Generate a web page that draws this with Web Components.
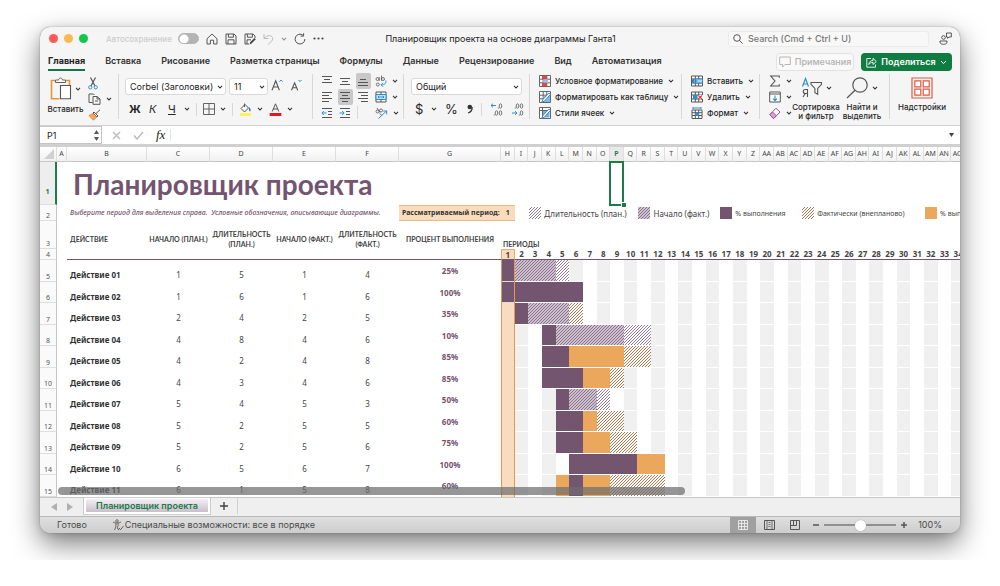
<!DOCTYPE html>
<html lang="ru">
<head>
<meta charset="utf-8">
<title>Планировщик проекта</title>
<style>
body { margin: 0; background: #fff; font-family: Inter, "Liberation Sans", sans-serif; font-size: 8px; color: #262626; }
</style>
</head>
<body>
<planner-window></planner-window>

<script>
const define = (name, css, html, extra) => {
  const tpl = document.createElement('template');
  tpl.innerHTML = `<style>*{box-sizing:border-box}button,input,select{font:inherit;color:inherit;margin:0;padding:0;border:0;background:none;outline:0}${css}</style>${html}`;
  customElements.define(name, class extends HTMLElement {
    constructor() {
      super();
      this.attachShadow({ mode: 'open' }).append(tpl.content.cloneNode(true));
    }
    connectedCallback() { if (extra) extra(this, this.shadowRoot); }
  });
};

/* ---------- icons ---------- */
const G = 'stroke="#555" fill="none"';
const B = 'stroke="#2b8fd0" fill="none"';
const lines = (a) => a.map(([x1, x2, y]) => `<path d="M${x1} ${y}H${x2}" ${G}/>`).join('');
const ICONS = {
  chev: [6, 4, `<path d="M1 .8 3 3 5 .8" stroke="#333" fill="none" stroke-width="1.1"/>`],
  chevw: [7, 5, `<path d="M1 1 3.500 3.600 6 1" stroke="#fff" fill="none"/>`],
  home: [12, 12, `<path d="M1 5.800 6 1l5 4.800V11H7.600V7.200H4.400V11H1z" ${G}/>`],
  save: [12, 12, `<path d="M1 1h8l2 2v8H1zM3.400 1v3.200h5V1M3 11V6.800h6V11" ${G}/>`],
  saveas: [12, 12, `<path d="M5 11H1V1h8l2 2v2M3.400 1v3.200h5V1M3 11V6.800h4" ${G}/><path d="M5.500 11.500 6.300 9 10.500 5l1.300 1.300-4.200 4.300z" fill="#444"/>`],
  undo: [11, 12, `<path d="M1 1v4.500h4.500M1.200 5.300C4 1.500 9.500 2 9.700 5.600 9.800 8 7 9.500 5 11.500" stroke="#bbb" fill="none"/>`],
  redo: [12, 12, `<path d="M10.900 6A4.900 4.900 0 1 1 9 2.200M9.600 .2v2.900H6.600" ${G}/>`],
  dots: [11, 3, `<circle cx="1.500" cy="1.500" r="1.100" fill="#444"/><circle cx="5.500" cy="1.500" r="1.100" fill="#444"/><circle cx="9.500" cy="1.500" r="1.100" fill="#444"/>`],
  search: [10, 10, `<circle cx="4" cy="4" r="3.300" ${G}/><path d="M6.400 6.400 9.500 9.500" ${G}/>`],
  people: [13, 13, `<circle cx="4.500" cy="5.500" r="1.800" ${G}/><path d="M1 9h7v1.200C8 13 1 13 1 10.200zM7.500 1h4.800v4H10L8.600 6.300V5H7.500z" ${G}/>`],
  comment: [12, 12, `<path d="M.7 1h10.600v7.500H6L3.500 11V8.500H.7z" stroke="#b5b5b5" fill="none"/>`],
  share: [11, 11, `<path d="M5 1.500H.800v8.700h8.700V7.500M2.800 7.500c.3-2.800 2-4 4.200-4V1.300L10.300 4.500 7 7.500V5.400c-2 0-3.200.6-4.200 2.100z" stroke="#fff" fill="none" stroke-width=".9"/>`],
  paste: [22, 24, `<path d="M5 3.500H1.500v18.200h8M16 3.500h3.500V8" stroke="#e8953a" fill="none" stroke-width="1.600"/><path d="M5.500 5.500V3h3c.4-2.600 3.600-2.600 4 0h3v2.500z" fill="#fafafa" stroke="#666"/><path d="M10.500 8.500h10v13.200h-10z" fill="#fff" stroke="#555" stroke-width="1.100"/>`],
  cut: [10, 13, `<path d="M2.500 .5 7 9M7.500 .5 3 9" ${G} stroke-width="1.200"/><circle cx="2.300" cy="10.300" r="1.600" ${B}/><circle cx="7.700" cy="10.300" r="1.600" ${B}/>`],
  copy: [13, 12, `<path d="M4.500 9.500H1V1h4.500l1 1" ${G}/><path d="M5 3.500h4l3 2.500v5.300H5zM9 3.500V6h3M7 8h3" ${G}/>`],
  brush: [13, 12, `<path d="M12 .8 8 4.500M6 3l4 4-1 1-4-4z" stroke="#555" fill="#fff"/><path d="M5 4.500 1 6.500 5.500 11.200 8.700 8z" fill="#f4a95c" stroke="#d9803a" stroke-width=".8"/>`],
  borders: [12, 12, `<path d="M.5 .5h11v11H.5zM6 .5v11M.5 6h11" ${G} stroke-width=".9"/>`],
  bucket: [13, 13, `<path d="M6 1.500 2 5.500 5.500 9l4-4zM5.500 .5v3.500" ${G}/><path d="M10 4c2 2 2 3.500 1 4.500-1-.5-1.300-2-1-4.500z" fill="#2b6fb0"/><path d="M1 10h11v3H1z" fill="#fff25a"/>`],
  fontcolor: [13, 13, `<path d="M3.200 8.500 6.500 .8 9.800 8.500M4.300 6h4.400" ${G}/><path d="M.7 10h11.600v3H.7z" fill="#e8141c"/>`],
  biga: [12, 12, `<path d="M1 11.200 4.700 1.800 8.400 11.200M2.300 8h4.800" ${G} stroke-width="1.100"/><path d="M8.500 2.600 10 1l1.500 1.600" ${B}/>`],
  smalla: [12, 12, `<path d="M1.500 11.200 4.600 3.800 7.700 11.200M2.600 8.700h4" ${G} stroke-width="1.100"/><path d="M8.500 1 10 2.600 11.500 1" ${B}/>`],
  top: [12, 12, lines([[1, 11, 1.5], [3, 9, 4.5], [1, 11, 7.5]])],
  mid: [12, 12, lines([[1, 11, 3.5], [3, 9, 6.5], [1, 11, 9.5]])],
  bot: [12, 12, lines([[3, 9, 4.5], [1, 11, 7.5], [1, 11, 10.5]])],
  left: [12, 12, lines([[1, 11, 1.5], [1, 8, 4.5], [1, 11, 7.5], [1, 8, 10.5]])],
  center: [12, 12, lines([[1, 11, 1.5], [3, 9, 4.5], [1, 11, 7.5], [3, 9, 10.5]])],
  right: [12, 12, lines([[1, 11, 1.5], [4, 11, 4.5], [1, 11, 7.5], [4, 11, 10.5]])],
  outdent: [12, 12, lines([[1, 11, 1.5], [7, 11, 4.5], [7, 11, 7.5], [1, 11, 10.5]]) + `<path d="M5.500 6H1M2.800 4 .9 6l1.900 2" ${B}/>`],
  indent: [12, 12, lines([[1, 11, 1.5], [7, 11, 4.5], [7, 11, 7.5], [1, 11, 10.5]]) + `<path d="M.5 6H5M3.200 4 5.100 6 3.200 8" ${B}/>`],
  wrap: [12, 13, `<circle cx="2.500" cy="4" r="1.500" ${G} stroke-width=".8"/><path d="M4.300 2.200v3.600M6.500 .5v5.300" ${G} stroke-width=".8"/><circle cx="8" cy="4" r="1.500" ${G} stroke-width=".8"/><circle cx="2.800" cy="9.500" r="1.500" ${G} stroke-width=".8"/><path d="M10.800 5.500c.5 3-1 4.300-4.600 4.300M8 7.800 6 9.800l2 2" ${B}/>`],
  merge: [12, 12, `<path d="M1 1h10v10H1z" fill="#fff" stroke="#555"/><path d="M1 3.500h10v5H1z" fill="#cfe6f6" stroke="#2b8fd0"/><path d="M6 1v2.500M6 8.500V11" ${G}/><path d="M3 6h6M4.300 4.800 3 6l1.300 1.200M7.700 4.800 9 6 7.700 7.200" stroke="#1f78b8" fill="none" stroke-width=".8"/>`],
  orient: [13, 12, `<circle cx="2.500" cy="4.500" r="1.500" ${G} stroke-width=".8"/><circle cx="6" cy="3.500" r="1.500" ${G} stroke-width=".8"/><path d="M2 1l3 4.500M4.500 6.500l2.500 2" ${G} stroke-width=".8"/><path d="M3.500 11.500 11.500 4M8.300 4h3.400v3.300" ${B}/>`],
  decinc: [13, 13, `<path d="M6 2.500H1M3 .7 1 2.500l2 1.800" ${B}/><ellipse cx="10.500" cy="3" rx="1.300" ry="2.200" ${G} stroke-width=".8"/><ellipse cx="6.500" cy="10" rx="1.300" ry="2.200" ${G} stroke-width=".8"/><ellipse cx="10.500" cy="10" rx="1.300" ry="2.200" ${G} stroke-width=".8"/><path d="M3.800 12h.9M7.800 5h.9" ${G}/>`],
  decdec: [13, 13, `<path d="M1 10h5M4 8.200 6 10l-2 1.800" ${B}/><ellipse cx="10.500" cy="3" rx="1.300" ry="2.200" ${G} stroke-width=".8"/><ellipse cx="6.500" cy="3" rx="1.300" ry="2.200" ${G} stroke-width=".8"/><ellipse cx="10.500" cy="10" rx="1.300" ry="2.200" ${G} stroke-width=".8"/><path d="M3.800 5h.9M7.800 12h.9" ${G}/>`],
  comma: [7, 10, `<circle cx="3.800" cy="3" r="2.300" fill="#333"/><path d="M6.100 3c.2 3-1.300 5.200-4 6" stroke="#333" fill="none" stroke-width="1.200"/>`],
  cond: [12, 12, `<path d="M.5 .5h11v11H.5zM.5 4.200h11M.5 7.800h11M4.200 .5v11M7.800 .5v11" fill="#fff" stroke="#666"/><path d="M3 1h5v3.300H3zM3 7.700h5V11H3z" fill="#e8414c"/><path d="M4.300 4.300H9v3.400H4.300z" fill="#8ec5ea"/>`],
  fmt: [12, 12, `<path d="M.5 .5h11v11H.5zM.5 4.200h11M.5 7.800h11M4.200 .5v11M7.800 .5v11" fill="#fff" stroke="#666"/><path d="M5 5h6v6H5z" fill="#7fbde8"/><path d="M2.500 11.500 4 8.500 10 2l1.500 1.300L5.500 10z" fill="#fff" stroke="#2474ad" stroke-width=".8"/>`],
  cellst: [12, 12, `<path d="M.5 .5h11v11H.5zM.5 3.500h11M3.500 .5v11" fill="#fff" stroke="#666"/><path d="M4 4h6.500v6.500H4z" fill="#6db3e4"/><path d="M2.500 11.500 4 8.500 10 2l1.500 1.300L5.500 10z" fill="#fff" stroke="#2474ad" stroke-width=".8"/>`],
  ins: [12, 12, `<path d="M.5 1h11v10H.5zM.5 4h11M.5 8h11M4.300 1v10M7.700 1v10" fill="#fff" stroke="#555"/><path d="M4.500 4H11.500v4H4.500z" fill="#a9d3f0" stroke="#2b8fd0"/><path d="M6.500 6H1M3 4 1 6l2 2" stroke="#1f78b8" fill="none" stroke-width="1.200"/>`],
  del: [12, 12, `<path d="M.5 1h11v10H.5zM.5 4h11M.5 8h11M4.300 1v10M7.700 1v10" fill="#fff" stroke="#555"/><path d="M2 4h4.500v4H2z" fill="#2b8fd0"/><path d="M7 4h5v4H7z" fill="#fff"/><path d="M7.300 4.300 11 8M11 4.300 7.300 8" stroke="#e33" fill="none" stroke-width="1.200"/>`],
  form: [12, 12, `<path d="M1 3h10v8.500H1zM1 5.700h10M1 8.500h10M4.300 3v8.500M7.700 3v8.500" fill="#fff" stroke="#555"/><path d="M4 5.700h4v3H4z" fill="#2b8fd0"/><path d="M2 1h8M2 0v2M10 0v2" ${B}/>`],
  sigma: [12, 12, `<path d="M10.300 2.800V1H1.700L6 6 1.700 11h8.600V9.200" ${G} stroke-width="1.100"/>`],
  filldn: [12, 12, `<path d="M.7 1h10.600v10H.7zM.7 3h10.600" fill="#fff" stroke="#555"/><path d="M6 4.500v5M4 7.600 6 9.600l2-2" ${B} stroke-width="1.100"/>`],
  eraser: [12, 12, `<path d="M1 7.500 7 1.200 11 5 5 11.200H4z" fill="#fff" stroke="#a44aa8"/><path d="M1 7.500 3.500 5 7.300 8.800 5 11.200H4z" fill="#d9a6db" stroke="#a44aa8"/>`],
  sort: [22, 22, `<path d="M1.500 9.500 4.500 1.500 7.500 9.500M2.500 7h4" stroke="#2b8fd0" fill="none" stroke-width="1.200"/><path d="M6.500 20V12.500H4.200c-2.600 0-2.600 4 0 4H6.500M4.300 16.500 2 20" ${G} stroke-width="1.100"/><path d="M10 5.500h10.500v1.800L16.700 11.500v5.800l-2.800-1.600v-4.200L10 7.300z" ${G} stroke-width="1.100"/>`],
  find: [23, 22, `<circle cx="14" cy="8" r="7.200" ${G} stroke-width="1.200"/><path d="M9 13.200 1 21" ${G} stroke-width="1.200"/>`],
  addins: [22, 22, `<path d="M1 1h20v20H1z" fill="none" stroke="#dd5a43" stroke-width="1.200"/><path d="M3.800 3.800h6v6h-6zM12.200 3.800h6v6h-6zM3.800 12.200h6v6h-6zM12.200 12.200h6v6h-6z" fill="#fff" stroke="#dd5a43" stroke-width="1.200"/>`],
  cross: [9, 9, `<path d="M1 1l7 7M8 1 1 8" stroke="#bbb" fill="none" stroke-width="1.400"/>`],
  check: [11, 9, `<path d="M1 4.500 4 8 10 1" stroke="#bbb" fill="none" stroke-width="1.400"/>`],
  spin: [5, 13, `<path d="M2.500 1 5 5H0zM2.500 12 5 8H0z" fill="#555"/>`],
  down: [5, 4, `<path d="M0 0h5L2.500 4z" fill="#444"/>`],
  prev: [6, 8, `<path d="M6 0v8L0 4z" fill="#b0b0b0"/>`],
  next: [6, 8, `<path d="M0 0v8l6-4z" fill="#b0b0b0"/>`],
  plus: [8, 8, `<path d="M4 0v8M0 4h8" stroke="#444" fill="none" stroke-width="1.400"/>`],
  minus: [6, 2, `<path d="M0 1h6" stroke="#555" fill="none" stroke-width="1.500"/>`],
  plus2: [6, 6, `<path d="M3 0v6M0 3h6" stroke="#555" fill="none" stroke-width="1.500"/>`],
  access: [12, 12, `<circle cx="5" cy="2" r="1.300" ${G} stroke-width=".8"/><path d="M1 3c2 1.500 6 1.500 8 0M4 4.500c0 3-.5 5-1.500 6.500M6 4.500v2M7 11c-2-1-2-3.500-.5-4.500M7 9l1.500 1.800L11.500 7" ${G} stroke-width=".9"/>`],
  vnormal: [10, 10, `<path d="M.5 .5h9v9h-9zM3.500 0v10M6.500 0v10M0 3.500h10M0 6.500h10" stroke="#f4f4f4" fill="none" stroke-width=".8"/>`],
  vpage: [11, 10, `<path d="M.5 .5h10v9H.5z" ${G}/><path d="M3 1v8M8 1v8M4.500 2.500h2M4.500 4.500h2M4.500 6.500h2" ${G} stroke-width=".8"/>`],
  vbreak: [10, 10, `<path d="M.5 .5h9v9h-9zM3.500 .5v5M6.500 .5v5M.5 5.500h6" ${G}/>`],
  corner: [10, 10, `<path d="M10 0v10H0z" fill="#d0d0d0"/>`]
};
define('ui-icon', ':host{display:inline-block;flex:none;line-height:0}svg{display:block}', '', (el, root) => {
  const [w, h, body] = ICONS[el.getAttribute('name')];
  const s = document.createElement('span');
  s.innerHTML = `<svg width="${w}" height="${h}" viewBox="0 0 ${w} ${h}" aria-hidden="true">${body}</svg>`;
  root.append(s.firstChild);
});

/* ---------- button with icon, caption and optional menu arrow ---------- */
define('tool-button', `
:host{display:inline-flex;min-width:0}
button{display:flex;align-items:center;gap:4px;flex:1;white-space:nowrap;line-height:10px;font-weight:500;height:14px}
:host([menu]) button{justify-content:space-between}
:host([on]) button{background:#c8c8c8;border-radius:2px;margin:-1px;height:16px;padding:0 2px 0 1px}
:host([caption]) button{justify-content:flex-start}
:host([light]) button{font-weight:400}
ui-icon[name=chev]{margin-left:1px}
`, `<button type="button"><slot></slot></button>`, (el, root) => {
  const b = root.querySelector('button');
  if (el.hasAttribute('icon')) b.insertAdjacentHTML('afterbegin', `<ui-icon name="${el.getAttribute('icon')}"></ui-icon>`);
  if (el.hasAttribute('menu')) b.insertAdjacentHTML('beforeend', '<ui-icon name="chev"></ui-icon>');
  if (el.hasAttribute('label')) b.setAttribute('aria-label', el.getAttribute('label'));
});

/* tall button: large icon over a caption */
define('big-button', `
:host{display:block}
button{display:flex;flex-direction:column;align-items:center;width:100%;gap:4px;line-height:9px;font-weight:500;white-space:nowrap}
span{display:flex;align-items:center;gap:3px}
`, `<button type="button"><span></span><div><slot></slot></div></button>`, (el, root) => {
  root.querySelector('span').innerHTML = `<ui-icon name="${el.getAttribute('icon')}"></ui-icon>` + (el.hasAttribute('menu') ? '<ui-icon name="chev"></ui-icon>' : '');
});

define('pick-list', `
:host{display:flex;position:relative}
select{appearance:none;width:100%;height:17px;border:1px solid #d9d9d9;border-radius:3px;background:#fff;padding:0 4px;font-size:9px;line-height:15px;color:#222}
ui-icon{position:absolute;right:3px;top:7px;pointer-events:none}
`, `<select></select><ui-icon name="chev"></ui-icon>`, (el, root) => {
  const s = root.querySelector('select');
  s.setAttribute('aria-label', el.getAttribute('label'));
  s.innerHTML = `<option>${el.getAttribute('value')}</option>`;
});

/* ---------- title bar ---------- */
define('title-bar', `
:host{display:grid;grid-template-columns:minmax(0,1fr) auto minmax(0,1fr);align-items:center;height:23px;padding:0 8px 0 9px}
.l,.r{display:flex;align-items:center}
.dot{width:9px;height:9px;border-radius:50%;margin-right:6px}
.auto{display:flex;align-items:center;gap:6px;color:#cdcdcd;margin-left:12px;margin-right:7px;font-weight:500}
.auto input{appearance:none;width:21px;height:11px;border-radius:6px;background:radial-gradient(circle at 5px 5px,#fff 4px,transparent 5px),#b4b4b4;border:1px solid #b4b4b4}
.q{display:flex;align-items:center;gap:7px}
h1{margin:0;font-size:9px;font-weight:400;line-height:12px;color:#222;white-space:nowrap}
.r{justify-content:flex-end;gap:10px}
.s{display:flex;align-items:center;gap:5px;width:201px;height:16px;border:1px solid #ebebeb;border-radius:3px;padding:0 4px;background:#f8f8f8}
.s input{flex:1;min-width:0;font-size:9px;font-weight:500}
.s input::placeholder{color:#777;opacity:1}
button{display:flex}
`, `
<div class="l">
  <i class="dot" style="background:#fc5b57"></i><i class="dot" style="background:#fdb94b"></i><i class="dot" style="background:#12c74e"></i>
  <div class="auto"><label for="as">Автосохранение</label><input id="as" type="checkbox"></div>
  <div class="q">
    <button aria-label="Домой"><ui-icon name="home"></ui-icon></button>
    <button aria-label="Сохранить"><ui-icon name="save"></ui-icon></button>
    <button aria-label="Сохранить как"><ui-icon name="saveas"></ui-icon></button>
    <button aria-label="Отменить"><ui-icon name="undo"></ui-icon></button>
    <button aria-label="Список отмены"><ui-icon name="chev" style="opacity:.5"></ui-icon></button>
    <button aria-label="Повторить"><ui-icon name="redo"></ui-icon></button>
    <button aria-label="Ещё"><ui-icon name="dots"></ui-icon></button>
  </div>
</div>
<h1>Планировщик проекта на основе диаграммы Ганта1</h1>
<div class="r">
  <label class="s"><ui-icon name="search"></ui-icon><input type="search" aria-label="Поиск" placeholder="Search (Cmd + Ctrl + U)"></label>
  <button aria-label="Люди"><ui-icon name="people"></ui-icon></button>
</div>`);

/* ---------- tabs ---------- */
define('ribbon-tabs', `
:host{display:flex;align-items:center;height:24px;padding:0 8px}
nav{display:flex;gap:20px;flex:1}
a{color:#333;text-decoration:none;font-size:9px;font-weight:600;line-height:16px;height:18px;white-space:nowrap;border-bottom:2px solid transparent}
a.on{color:#222;border-color:#1a7245;font-weight:700}
.b{display:flex;gap:7px}
button{display:flex;align-items:center;justify-content:center;gap:4px;height:18px;border-radius:4px;font-size:9px;line-height:16px;font-weight:500}
.c{width:78px;border:1px solid #e2e2e2;background:#f9f9f9;color:#b0b0b0;padding:0 2px}
.s{width:91px;background:#0f7c42;color:#fff;font-weight:600}
`, `<nav><a class="on" href="#">Главная</a><a href="#">Вставка</a><a href="#">Рисование</a><a href="#">Разметка страницы</a><a href="#">Формулы</a><a href="#">Данные</a><a href="#">Рецензирование</a><a href="#">Вид</a><a href="#">Автоматизация</a></nav>
<div class="b"><button class="c"><ui-icon name="comment"></ui-icon>Примечания</button><button class="s"><ui-icon name="share"></ui-icon>Поделиться<ui-icon name="chevw"></ui-icon></button></div>`);

/* ---------- ribbon ---------- */
define('ribbon-group', `
:host{display:block;height:45px;border-right:1px solid #d8d8d8}
:host(:last-child){border-right:0}
`, `<slot></slot>`);

define('app-ribbon', `
:host{display:grid;grid-template-columns:79px 194px 91px 126px 152px 78px 130px minmax(70px,1fr);height:52px;border-bottom:1px solid #d2d2d2;box-sizing:border-box}
.clip{display:grid;grid-template-columns:35px 21px;gap:5px;padding:3px 0 0 8px}
.col{display:flex;flex-direction:column;gap:2px}
.f1{display:grid;grid-template-columns:101px 39px 16px 16px;gap:3px;padding:4px 0 0 6px}
.f2{display:flex;align-items:center;padding:6px 0 0 10px;height:22px;gap:6px}
.f2 i,.n2 i,.al i{width:1px;height:13px;background:#d8d8d8}
.ch{font-size:11px}
.al{display:grid;grid-template-columns:12px 12px 12px 22px;column-gap:6px;row-gap:2px;padding:0 0 0 8px}
.n1{padding:4px 7px 0 7px}
.n2{display:flex;align-items:center;gap:8px;padding:6px 0 0 11px;height:22px}
.n2 tool-button{font-size:13px}
.li{padding:0 0 0 9px}
.ed{display:grid;grid-template-columns:20px 44px 38px;gap:5px;padding:0 0 0 9px}
.ad{padding:3px 0 0 9px;width:46px;box-sizing:content-box}
big-button{margin-top:3px}
.clip .col{margin-top:-1px}
.clip big-button,.ad big-button{margin-top:0}
`, `
<ribbon-group><div class="clip"><big-button icon="paste" menu>Вставить</big-button>
  <div class="col"><tool-button icon="cut" label="Вырезать"></tool-button><tool-button icon="copy" menu label="Копировать"></tool-button><tool-button icon="brush" label="Формат по образцу"></tool-button></div></div></ribbon-group>
<ribbon-group>
  <div class="f1"><pick-list label="Шрифт" value="Corbel (Заголовки)"></pick-list><pick-list label="Размер" value="11"></pick-list><tool-button icon="biga" label="Увеличить шрифт"></tool-button><tool-button icon="smalla" label="Уменьшить шрифт"></tool-button></div>
  <div class="f2"><tool-button class="ch" style="width:14px"><b>Ж</b></tool-button><tool-button light class="ch" style="width:13px"><em>К</em></tool-button><tool-button light class="ch" menu style="width:22px"><u>Ч</u></tool-button><i></i><tool-button icon="borders" menu label="Границы"></tool-button><i></i><tool-button icon="bucket" menu label="Заливка"></tool-button><tool-button icon="fontcolor" menu label="Цвет шрифта"></tool-button></div>
</ribbon-group>
<ribbon-group><div class="al">
  <tool-button icon="top" label="По верхнему краю"></tool-button><tool-button icon="mid" label="По середине"></tool-button><tool-button on icon="bot" label="По нижнему краю"></tool-button><tool-button icon="wrap" menu label="Перенос текста"></tool-button>
  <tool-button icon="left" label="По левому краю"></tool-button><tool-button on icon="center" label="По центру"></tool-button><tool-button icon="right" label="По правому краю"></tool-button><tool-button icon="merge" menu label="Объединить"></tool-button>
  <tool-button icon="outdent" label="Уменьшить отступ"></tool-button><tool-button icon="indent" label="Увеличить отступ"></tool-button><i></i><tool-button icon="orient" menu label="Ориентация"></tool-button>
</div></ribbon-group>
<ribbon-group><div class="n1"><pick-list label="Формат числа" value="Общий"></pick-list></div>
  <div class="n2"><tool-button light menu style="width:22px">$</tool-button><tool-button light>%</tool-button><tool-button icon="comma" label="Разделитель"></tool-button><i></i><tool-button icon="decinc" label="Увеличить разрядность"></tool-button><tool-button icon="decdec" label="Уменьшить разрядность"></tool-button></div>
</ribbon-group>
<ribbon-group><div class="li col"><tool-button caption icon="cond" menu>Условное форматирование</tool-button><tool-button caption icon="fmt" menu>Форматировать как таблицу</tool-button><tool-button caption icon="cellst" menu>Стили ячеек</tool-button></div></ribbon-group>
<ribbon-group><div class="li col"><tool-button caption icon="ins" menu>Вставить</tool-button><tool-button caption icon="del" menu>Удалить</tool-button><tool-button caption icon="form" menu>Формат</tool-button></div></ribbon-group>
<ribbon-group><div class="ed"><div class="col"><tool-button icon="sigma" menu label="Сумма"></tool-button><tool-button icon="filldn" menu label="Заполнить"></tool-button><tool-button icon="eraser" menu label="Очистить"></tool-button></div>
  <big-button icon="sort" menu>Сортировка<br>и фильтр</big-button><big-button icon="find" menu>Найти и<br>выделить</big-button></div></ribbon-group>
<ribbon-group><div class="ad"><big-button icon="addins">Надстройки</big-button></div></ribbon-group>`);

/* ---------- formula bar ---------- */
define('formula-bar', `
:host{display:flex;align-items:center;height:21px;background:#fff;border-bottom:3px solid #d0d0d0;box-sizing:border-box}
.n{display:flex;align-items:center;width:62px;height:18px;border:1px solid #c4c4c4;border-left:0;padding:0 2px 0 7px}
.n input{flex:1;min-width:0;font-size:9px}
.a{display:flex;align-items:center;gap:12px;padding:0 9px 0 10px;width:68px}
em{font:italic 400 13px/14px "Liberation Serif",serif;color:#222}
.f{flex:1;border-left:1px solid #e4e4e4;height:12px;min-width:0}
ui-icon[name=down]{margin-right:6px}
`, `<div class="n"><input aria-label="Поле имени" value="P1"><ui-icon name="spin"></ui-icon></div>
<div class="a"><ui-icon name="cross"></ui-icon><ui-icon name="check"></ui-icon><em>fx</em></div><input class="f" aria-label="Строка формул"><ui-icon name="down"></ui-icon>`);

/* ---------- sheet ---------- */
const COLS = 34;
const DATA = [
  ['01', 1, 5, 1, 4, 25, 'p1-1 l2-4 w5-5'],
  ['02', 1, 6, 1, 6, 100, 'p1-6'],
  ['03', 2, 4, 2, 5, 35, 'p2-2 l3-5 h6-6'],
  ['04', 4, 8, 4, 6, 10, 'p4-4 l5-9 w10-11'],
  ['05', 4, 2, 4, 8, 85, 'p4-5 o6-9 h10-11'],
  ['06', 4, 3, 4, 6, 85, 'p4-6 o7-8 h9-9'],
  ['07', 5, 4, 5, 3, 50, 'p5-5 l6-7 w8-8'],
  ['08', 5, 2, 5, 5, 60, 'p5-6 o7-7 h8-9'],
  ['09', 5, 2, 5, 6, 75, 'p5-6 o7-8 h9-10'],
  ['10', 6, 5, 6, 7, 100, 'p6-10 o11-12'],
  ['11', 6, 1, 5, 8, 60, 'o5-5 p6-6 o7-8 h9-12']
];
const colName = (i) => (i < 26 ? '' : 'A') + String.fromCharCode(65 + i % 26);
const periodCells = (bars) => {
  const map = {};
  bars.split(' ').forEach((s) => {
    const [a, b] = s.slice(1).split('-').map(Number);
    for (let i = a; i <= b; i++) map[i] = s[0];
  });
  let out = `<td class="k now ${map[1] || ''}"></td>`;
  for (let i = 2; i <= COLS;) {
    const k = map[i];
    let n = 1;
    if (k) while (map[i + n] === k) n++;
    out += `<td class="k ${k || (i % 2 ? '' : 'g')}" colspan="${n}" style="grid-column:span ${n}"></td>`;
    i += n;
  }
  return out;
};
const legend = (k, t, n, c = '') => `<td class="lg ${c}" colspan="${n}" style="grid-column:span ${n}"><i class="${k}"></i><span>${t}</span></td>`;
let letters = '<th class="cn"><ui-icon name="corner"></ui-icon></th>';
for (let i = 0; i < 7 + COLS; i++) letters += `<th class="${i === 15 ? 'sel' : ''}">${colName(i)}</th>`;
let nums = '';
for (let i = 1; i <= COLS; i++) nums += `<th class="${i === 1 ? 'now' : ''}">${i}</th>`;

define('sheet-grid', `
:host{display:block;position:relative;overflow:hidden;background:#fff;font-family:"Noto Sans","Open Sans",sans-serif;color:#444}
table{display:block;width:calc(100% + 5px)}
thead,tbody{display:block}
tr{display:grid;grid-template-columns:17px 10px 80px 63px 63px 63px 63px 102px repeat(34,minmax(0,1fr))}
th,td{padding:0;font-weight:400;text-align:center;white-space:nowrap;min-width:0;display:block}
thead th{height:15px;line-height:13px;color:#444;background:linear-gradient(#fff,#f1f1f1);border-right:1px solid #dedede;border-bottom:1px solid #c6c6c6;overflow:hidden;font-size:7px}
thead .cn{padding:2px 0 0 4px;text-align:left}
thead .sel{background:#e9e9e9;color:#1a7245;font-weight:600}
tr .n{display:flex;align-items:flex-end;justify-content:center;background:#fafafa;border-right:1px solid #c6c6c6;border-bottom:1px solid #dedede;font-size:7px;line-height:9px;color:#555}
.r1 .n{background:#eee;border-right:2px solid #217a4b;color:#217a4b;font-weight:700;padding-bottom:8px}
.r1{height:43px}.r2{height:16px}.r3{height:28px}.r4{height:11px}
h2{margin:0;font-family:Lato,"Noto Sans",sans-serif;font-size:28px;line-height:40px;padding:2px 0 0 6px;color:#745570;text-align:left;font-weight:700}
.cur{position:relative}
.cur::before{content:"";position:absolute;inset:-1px 0 -1px -1px;border:2px solid #1f7a4a}
.cur::after{content:"";position:absolute;right:-2px;bottom:-3px;width:4px;height:4px;background:#1f7a4a;border:1px solid #fff;border-right:0}
.nt{text-align:left;font-style:italic;font-size:7px;line-height:16px;color:#745570;padding-left:3px;font-weight:500}
.pr{background:#fadcbd;border:solid #e6b98a;border-width:1px 0;font-size:7px;line-height:14px;font-weight:700;color:#333;text-align:left;padding-left:3px}
.pv{padding:0;text-align:center}
.lg{display:flex;align-items:center;gap:3px;overflow:hidden;font-size:8px;padding-left:1px}
.lg i{width:12px;height:12px;flex:none}
.lg.s{font-size:7px}
.h3{font-family:Lato,"Noto Sans",sans-serif;font-size:7px;font-weight:700;line-height:10px;color:#444;display:flex;align-items:center;justify-content:center;padding-top:8px}
.h3.lf{justify-content:flex-start;padding-left:3px}
.h3.per{align-items:flex-end;justify-content:flex-start;padding-left:2px}
.r4 th:not(.n){font-size:8px;font-weight:700;color:#444;line-height:10px;border-bottom:1px solid #745570}
.r4 th.now:not(.n){background:#fadcbd;border:1px solid #e6ab70;border-bottom-color:#745570;line-height:9px}
.d{height:21px}.d:nth-child(odd){height:22px}
.v{font-size:8px;line-height:11px;padding-top:9px}
.nm{text-align:left;padding-left:3px;font-weight:700;color:#333}
.pc{font-size:8px;line-height:11px;padding-top:5px;font-weight:700;color:#745570}
.k{margin-bottom:1px}
.now.k{margin-bottom:0;border:solid #e2984f;border-width:0 1px;background-color:#f8dcc0}
.g{background:#f0f0f0}
.p,.now.k.p{background:#745570}
.o{background:#eba85c}
.l{background:linear-gradient(135deg,transparent 42%,#8d7190 42% 58%,transparent 58%) 0 0/3px 3px #cdc1ce}
.w{background:linear-gradient(135deg,transparent 42%,#94799a 42% 58%,transparent 58%) 0 0/3px 3px #fff}
.h{background:linear-gradient(135deg,transparent 42%,#b0784f 42% 58%,transparent 58%) 0 0/3px 3px #fff}
.now.k.p{box-shadow:inset 0 -1px #e8d8dc}
.sb{position:absolute;left:18px;width:627px;bottom:2px;height:8px;border-radius:4px;background:rgba(110,110,110,.72)}
`, `
<table>
<thead><tr>${letters}</tr></thead>
<tbody>
<tr class="r1"><th class="n">1</th><td></td><td style="grid-column:span 14" colspan="14"><h2>Планировщик проекта</h2></td><td class="cur"></td><td style="grid-column:span 25" colspan="25"></td></tr>
<tr class="r2"><th class="n">2</th><td></td><td class="nt" colspan="5" style="grid-column:span 5">Выберите период для выделения справа.&nbsp; Условные обозначения, описывающие диаграммы.</td><td class="pr">Рассматриваемый период:</td><td class="pr pv">1</td><td></td>
${legend('w', 'Длительность (план.)', 8)}${legend('l', 'Начало (факт.)', 6)}${legend('p', '% выполнения', 6, 's')}${legend('h', 'Фактически (внепланово)', 9, 's')}${legend('o', '% выполнения (внепланово)', 3, 's')}</tr>
<tr class="r3"><th class="n">3</th><td></td><th class="h3 lf">ДЕЙСТВИЕ</th><th class="h3">НАЧАЛО (ПЛАН.)</th><th class="h3">ДЛИТЕЛЬНОСТЬ<br>(ПЛАН.)</th><th class="h3">НАЧАЛО (ФАКТ.)</th><th class="h3">ДЛИТЕЛЬНОСТЬ<br>(ФАКТ.)</th><th class="h3">ПРОЦЕНТ ВЫПОЛНЕНИЯ</th><th class="h3 per" colspan="34" style="grid-column:span 34">ПЕРИОДЫ</th></tr>
<tr class="r4"><th class="n">4</th><td></td><th></th><th></th><th></th><th></th><th></th><th></th>${nums}</tr>
${DATA.map((r, i) => `<tr class="d"><th class="n">${i + 5}</th><td></td><td class="v nm">Действие ${r[0]}</td><td class="v">${r[1]}</td><td class="v">${r[2]}</td><td class="v">${r[3]}</td><td class="v">${r[4]}</td><td class="pc">${r[5]}%</td>${periodCells(r[6])}</tr>`).join('')}
</tbody></table>
<div class="sb"></div>`);

/* ---------- sheet tabs and status ---------- */
define('sheet-tabs', `
:host{display:flex;align-items:flex-start;height:19px;background:#efefef;border-top:1px solid #c8c8c8;box-sizing:border-box;padding-left:11px}
.ar{display:flex;gap:10px;padding-top:5px;width:32px;margin-right:1px}
a{width:126px;height:16px;border:2px solid #fff;border-top-width:1px;outline:1px solid #ccc;text-align:center;font-size:9px;font-weight:600;line-height:14px;color:#1a7a4c;text-decoration:none;background:linear-gradient(#f3eff3,#cbbfca);white-space:nowrap}
button{width:28px;height:16px;display:flex;align-items:center;justify-content:center;border-right:1px solid #d0d0d0}
`, `<div class="ar"><ui-icon name="prev"></ui-icon><ui-icon name="next"></ui-icon></div><a href="#">Планировщик проекта</a><button aria-label="Новый лист"><ui-icon name="plus"></ui-icon></button>`);

define('status-bar', `
:host{display:flex;align-items:center;height:17px;background:linear-gradient(#dfdfdf,#cdcdcd);border-top:1px solid #b8b8b8;box-sizing:border-box;padding:0 18px 0 17px;font-size:9px;line-height:12px;color:#4a4a4a}
.ac{display:flex;align-items:center;gap:1px;margin-left:25px;flex:1;font-size:9px}
.vw button{display:flex;align-items:center;justify-content:center;width:26px;height:16px}
.vw{display:flex}.vw .on{background:#a0a0a0}
.z{display:flex;align-items:center;gap:5px;margin-left:5px}
input{appearance:none;width:72px;height:12px;background:linear-gradient(#8f8f8f,#8f8f8f) center/100% 2px no-repeat}
input::-webkit-slider-thumb{appearance:none;width:11px;height:11px;border-radius:50%;background:#fff;box-shadow:0 0 1px #888}
output{margin-left:6px}
`, `<span>Готово</span><span class="ac"><ui-icon name="access"></ui-icon>Специальные возможности: все в порядке</span>
<div class="vw"><button class="on" aria-label="Обычный"><ui-icon name="vnormal"></ui-icon></button><button aria-label="Разметка страницы"><ui-icon name="vpage"></ui-icon></button><button aria-label="Разрывы"><ui-icon name="vbreak"></ui-icon></button></div>
<div class="z"><ui-icon name="minus"></ui-icon><input type="range" aria-label="Масштаб" value="50"><ui-icon name="plus2"></ui-icon><output>100%</output></div>`);

define('planner-window', `
:host{display:block;margin:27px 40px;border-radius:10px;overflow:hidden;background:#f5f5f5;box-shadow:0 0 1px rgba(0,0,0,.6),0 11px 28px rgba(0,0,0,.5),0 2px 8px rgba(0,0,0,.12)}
`, `<title-bar></title-bar><ribbon-tabs></ribbon-tabs><app-ribbon></app-ribbon><formula-bar></formula-bar><sheet-grid></sheet-grid><sheet-tabs></sheet-tabs><status-bar></status-bar>`);
</script>
</body>
</html>
